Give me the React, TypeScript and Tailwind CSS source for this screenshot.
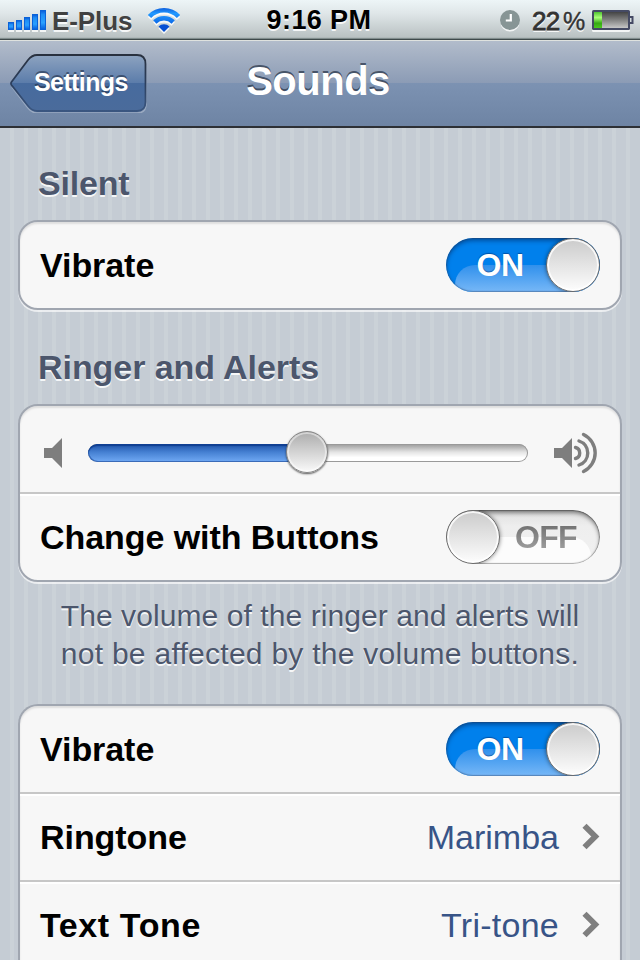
import type { ReactNode } from 'react';

const insetShadow = '[text-shadow:0_2px_0_rgba(255,255,255,0.85)]';

function StatusBar() {
  return (
    <header className="grid h-10 grid-cols-[240px_1fr_240px] items-center border-b border-[#3f4a4b] bg-[linear-gradient(#edf5f7_0%,#dfe6e8_35%,#b9c1c2_96%,#808c8c_97%)] text-[26px] leading-[38px] font-bold">
      <div className="flex h-[40px] items-center pt-px pl-2">
        <svg width="38" height="22" viewBox="0 0 38 22">
          <defs>
            <linearGradient id="bar" x1="0" y1="0" x2="0" y2="1">
              <stop offset="0" stopColor="#0b60dc" />
              <stop offset="0.2" stopColor="#1e8df5" />
              <stop offset="0.65" stopColor="#2aa0ff" />
              <stop offset="1" stopColor="#0763e0" />
            </linearGradient>
          </defs>
          {[8, 10, 13, 16, 20].map((h, i) => (
            <g key={h}>
              <rect x={i * 8} y={22 - h} width="6" height={h} fill="#fff" opacity="0.8" />
              <rect x={i * 8} y={20 - h} width="6" height={h} fill="#0a62d8" />
              <rect x={i * 8 + 1} y={21 - h} width="4" height={h - 2} fill="url(#bar)" />
            </g>
          ))}
        </svg>
        <span className={`ml-[6px] w-[81px] whitespace-nowrap tracking-[-0.1px] text-[#414141] ${insetShadow}`}>E-Plus</span>
        <svg className="ml-[14px]" width="34" height="28" viewBox="0 0 34 28">
          <defs>
            <linearGradient id="wifi" gradientUnits="userSpaceOnUse" x1="0" y1="0" x2="0" y2="26">
              <stop offset="0" stopColor="#0a55d8" />
              <stop offset="0.25" stopColor="#2299ff" />
              <stop offset="0.6" stopColor="#0e6eea" />
              <stop offset="1" stopColor="#0648cc" />
            </linearGradient>
          </defs>
          <g fill="none" stroke="#fff" strokeWidth="4.600" opacity="0.85" transform="translate(0 2)">
            <path d="M2.500 9.500a20 20 0 0 1 29 0" />
            <path d="M7.800 15a13.200 13.200 0 0 1 18.400 0" />
            <path d="M11.500 19.500l5.500 5.500 5.500-5.500a7.700 7.700 0 0 0-11 0z" fill="#fff" stroke="none" />
          </g>
          <g fill="none" stroke="url(#wifi)" strokeWidth="4.600">
            <path d="M2.500 9.500a20 20 0 0 1 29 0" />
            <path d="M7.800 15a13.200 13.200 0 0 1 18.400 0" />
            <path d="M11.500 19.500l5.500 5.500 5.500-5.500a7.700 7.700 0 0 0-11 0z" fill="#0750d3" stroke="none" />
          </g>
        </svg>
      </div>
      <div className={`pr-[2px] text-center text-[27px] tracking-[0.4px] whitespace-nowrap text-black ${insetShadow}`}>9:16 PM</div>
      <div className="flex h-[40px] items-center justify-end pt-px pr-[6px]">
        <svg width="20" height="22" viewBox="0 0 20 22">
          <circle cx="10" cy="12" r="9.6" fill="#fff" opacity="0.8" />
          <circle cx="10" cy="10" r="10" fill="#879595" />
          <path d="M10.800 4V10.500H5.800" fill="none" stroke="#fff" strokeWidth="2.200" />
        </svg>
        <span className={`ml-[12px] w-[29px] tracking-[-0.6px] whitespace-nowrap text-[#333] font-normal [-webkit-text-stroke:0.8px_#333] ${insetShadow}`}>22</span>
        <span className={`ml-[2px] w-[24px] font-normal [-webkit-text-stroke:0.4px_#333] text-[25px] tracking-[-1px] text-[#333] ${insetShadow}`}>%</span>
        <svg className="ml-[5px]" width="42" height="22" viewBox="0 0 42 22">
          <defs>
            <linearGradient id="cell" x1="0" y1="0" x2="0" y2="1">
              <stop offset="0" stopColor="#444" />
              <stop offset="0.45" stopColor="#7c7c7c" />
              <stop offset="1" stopColor="#c6c6c6" />
            </linearGradient>
            <linearGradient id="charge" x1="0" y1="0" x2="0" y2="1">
              <stop offset="0" stopColor="#4fc232" />
              <stop offset="0.35" stopColor="#a9ff77" />
              <stop offset="0.7" stopColor="#36a914" />
              <stop offset="1" stopColor="#4bc91f" />
            </linearGradient>
          </defs>
          <rect x="0" y="2" width="38" height="20" rx="1.5" fill="#fff" opacity="0.8" />
          <rect x="0" y="0" width="38" height="20" rx="1.5" fill="#454a64" />
          <rect x="2" y="2" width="34" height="16" fill="url(#cell)" />
          <rect x="2" y="2" width="8" height="16" fill="url(#charge)" />
          <path d="M38 6h3.5v8H38v-2h1.5V8H38z" fill="#454a64" />
        </svg>
      </div>
    </header>
  );
}

function NavBar() {
  return (
    <nav className="grid h-[88px] grid-cols-[147px_1fr_151px] items-center border-t border-b-2 border-t-[#dfe2df] border-b-[#2d3035] bg-[linear-gradient(#b2bccb_0%,#8b9bb5_50%,#7c92b2_50%,#6e84a4_100%)]">
      <button className="mb-[2px] ml-[10px] grid h-[60px] w-[137px]">
        <svg className="col-start-1 row-start-1" width="137" height="60" viewBox="0 0 137 60">
          <defs>
            <linearGradient id="back" x1="0" y1="0" x2="0" y2="1">
              <stop offset="0" stopColor="#8da3c0" />
              <stop offset="0.5" stopColor="#5b7caa" />
              <stop offset="0.5" stopColor="#476b9e" />
              <stop offset="1" stopColor="#4a6b9b" />
            </linearGradient>
            <linearGradient id="backEdge" x1="0" y1="0" x2="0" y2="1">
              <stop offset="0" stopColor="#29313f" />
              <stop offset="0.5" stopColor="#2c3f5e" />
              <stop offset="1" stopColor="#3a5680" />
            </linearGradient>
          </defs>
          <path d="M27 3H127Q136 3 136 12V51Q136 60 127 60H27Q22 60 18 55L2 34" fill="none" stroke="#a9b7cb" strokeWidth="1.5" opacity="0.7" />
          <path d="M27 2H127Q135.500 2 135.500 11V49Q135.500 58 127 58H27Q22 58 18 53L1.500 32Q.5 30.500 1.500 29L18 7Q22 2 27 2Z" fill="url(#back)" stroke="url(#backEdge)" strokeWidth="1.800" />
        </svg>
        <span className="col-start-1 row-start-1 pl-[24px] text-left text-[25px] leading-[58px] font-bold tracking-[-0.6px] text-white [text-shadow:0_-2px_0_rgba(30,45,70,0.6)]">
          Settings
        </span>
      </button>
      <h1 className="pb-[5px] text-center text-[40px] leading-[80px] font-bold tracking-[-0.5px] text-white [text-shadow:0_-2px_0_rgba(50,62,82,0.8)]">
        Sounds
      </h1>
    </nav>
  );
}

function Toggle({ on }: { on: boolean }) {
  const knob = (
    <span className="relative block size-[54px] shrink-0 rounded-full border-[1.5px] border-[#6a6a6a] bg-[linear-gradient(#cbcbcb,#fdfdfd)] shadow-[0_0_4px_rgba(0,0,0,0.5),inset_0_0_0_2px_rgba(255,255,255,0.8)]" />
  );
  return on ? (
    <span className="relative flex h-[54px] w-[154px] items-center overflow-hidden rounded-full bg-[#0080ec]">
      <span className="absolute top-[27px] left-[9px] h-[27px] w-[140px] rounded-tl-[20px] bg-[linear-gradient(#3090ec,#77b8f7)]" />
      <span className="absolute inset-0 rounded-full shadow-[inset_0_3px_4px_rgba(0,35,90,0.5),inset_0_0_1px_1px_rgba(60,90,130,0.5)]" />
      <span className="relative flex-1 pl-[8px] text-center text-[32px] leading-[54px] font-bold tracking-[-0.5px] text-white [text-shadow:0_-1px_1px_rgba(0,50,120,0.6)]">ON</span>
      {knob}
    </span>
  ) : (
    <span className="relative flex h-[54px] w-[154px] items-center overflow-hidden rounded-full bg-[linear-gradient(#dedede,#eee_30%,#f1f1f1)]">
      <span className="absolute top-[27px] left-[20px] h-[27px] w-[125px] rounded-tr-[20px] bg-[#fcfcfc]" />
      <span className="absolute inset-0 rounded-full shadow-[inset_0_3px_4px_rgba(0,0,0,0.45),inset_0_0_1px_1px_rgba(0,0,0,0.3)]" />
      {knob}
      <span className="relative flex-1 pr-[8px] text-center text-[32px] leading-[54px] font-bold tracking-[-0.7px] [background:linear-gradient(#747474_30%,#a0a0a0_75%)] bg-clip-text! text-transparent">OFF</span>
    </span>
  );
}

function Speaker({ loud }: { loud?: boolean }) {
  return (
    <svg width={loud ? 43 : 20} height="42" viewBox={loud ? '0 0 43 42' : '0 0 20 42'}>
      <path d="M0 16H8L18 6V36L8 26H0Z" fill="#7e7e7e" />
      {loud && (
        <g fill="none" stroke="#7e7e7e" strokeWidth="3.400" strokeLinecap="round">
          <path d="M21.500 15.500a5.700 5.700 0 0 1 0 11" />
          <path d="M25 9a12.600 12.600 0 0 1 0 24" />
          <path d="M29.500 2.500a20.500 20.500 0 0 1 0 37" />
        </g>
      )}
    </svg>
  );
}

function VolumeSlider() {
  return (
    <div className="grid h-[44px] w-[440px] items-center">
      <div className="col-start-1 row-start-1 flex h-[18px] overflow-hidden rounded-full bg-[linear-gradient(#999,#e4e4e4_45%,#fff_75%)] shadow-[inset_0_0_0_1px_#9a9a9a]">
        <div className="w-[220px] rounded-l-full bg-[linear-gradient(#1d50a6,#4580d2_45%,#71aaf5)] shadow-[inset_0_2px_1px_#103f92,inset_1px_-1px_0_#3a6bb8]" />
      </div>
      <div className="col-start-1 row-start-1 mt-[-2px] ml-[198px] size-[42px] rounded-full border border-[#858585] bg-[linear-gradient(#acacac,#fafafa)] shadow-[0_1px_2px_rgba(0,0,0,0.65),inset_0_0_0_2px_rgba(255,255,255,0.45)]" />
    </div>
  );
}

function Card({ children, open }: { children: ReactNode; open?: boolean }) {
  return (
    <section
      className={`mx-[18px] border-2 border-[#a0a6b0] bg-[#f7f7f7] shadow-[0_2px_0_rgba(255,255,255,0.65),inset_0_2px_2px_rgba(0,0,0,0.1)] ${
        open ? 'rounded-t-[20px] border-b-0' : 'rounded-[20px]'
      }`}
    >
      {children}
    </section>
  );
}

function Row({ label, children, first, spaced }: { label: string; children: ReactNode; first?: boolean; spaced?: boolean }) {
  return (
    <div
      className={`flex items-center justify-between pr-[20px] pl-[20px] text-[34px] ${
        first ? 'h-[86px]' : 'h-[88px] border-t-2 border-[#c7c7c7] shadow-[inset_0_2px_0_#fff]'
      }`}
    >
      <span className={`font-bold whitespace-nowrap text-black ${spaced ? 'tracking-[0.6px]' : 'tracking-[-0.06px]'}`}>{label}</span>
      {children}
    </div>
  );
}

function Value({ children, spaced }: { children: ReactNode; spaced?: boolean }) {
  return (
    <span className="flex items-center text-[#385487]">
      <span className={spaced ? 'tracking-[0.25px]' : ''}>{children}</span>
      <svg className="ml-[21px]" width="20" height="28" viewBox="0 0 20 28">
        <path d="M4.500 2.700L15.300 13.500L4.500 24.300" fill="none" stroke="#7f7f7f" strokeWidth="5.800" />
      </svg>
    </span>
  );
}

export default function App() {
  return (
    <div className="h-[960px] w-[640px] overflow-hidden bg-[#c5ccd4] bg-[repeating-linear-gradient(90deg,#c5ccd4_0px,#c5ccd4_10px,#cbd2d8_10px,#cbd2d8_14px)] font-['Liberation_Sans',Arial,sans-serif]">
      <StatusBar />
      <NavBar />
      <main>
        <h2 className={`h-[92px] pt-[35px] pl-[38px] text-[34px] leading-[40px] font-bold tracking-[-0.2px] text-[#4c566c] ${insetShadow}`}>Silent</h2>
        <Card>
          <Row label="Vibrate" first>
            <Toggle on />
          </Row>
        </Card>
        <h2 className={`h-[94px] pt-[37px] pl-[38px] text-[34px] leading-[40px] font-bold tracking-[-0.06px] text-[#4c566c] ${insetShadow}`}>
          Ringer and Alerts
        </h2>
        <Card>
          <div className="flex h-[86px] items-center pt-[8px] pl-[24px]">
            <Speaker />
            <div className="mr-[26px] ml-[24px]">
              <VolumeSlider />
            </div>
            <Speaker loud />
          </div>
          <Row label="Change with Buttons">
            <Toggle on={false} />
          </Row>
        </Card>
        <p className={`h-[122px] pt-[15px] text-center text-[30px] leading-[38px] text-[#4c566c] ${insetShadow}`}>
          <span className="tracking-[0.08px]">The volume of the ringer and alerts will</span>
          <br />
          <span className="tracking-[0.27px]">not be affected by the volume buttons.</span>
        </p>
        <Card open>
          <Row label="Vibrate" first>
            <Toggle on />
          </Row>
          <Row label="Ringtone">
            <Value>Marimba</Value>
          </Row>
          <Row label="Text Tone" spaced>
            <Value spaced>Tri-tone</Value>
          </Row>
        </Card>
      </main>
    </div>
  );
}
